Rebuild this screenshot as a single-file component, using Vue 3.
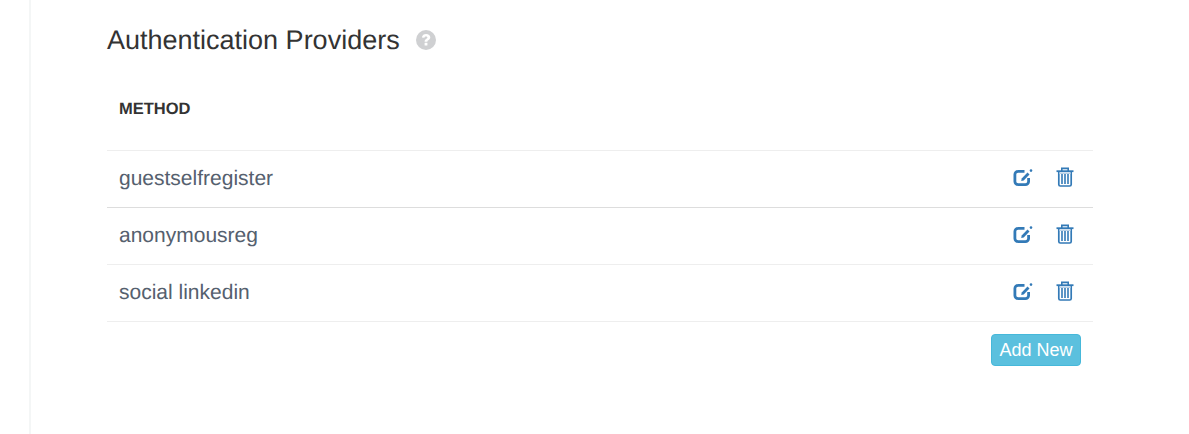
<template>
  <div class="page">
    <div class="panel">
      <h2 class="title">
        Authentication Providers
        <svg class="help" width="20" height="20" viewBox="0 0 20 20">
          <circle cx="10" cy="10" r="10" fill="#cfd0d2" />
          <path d="M5.9 7.4C6.2 5 7.9 3.9 10.1 3.9c2.4 0 4.2 1.3 4.2 3.4 0 1.6-1 2.3-1.9 2.9-.7.4-1 .7-1 1.5H8.6c0-1.6.6-2.3 1.5-2.8.8-.5 1.3-.8 1.3-1.4 0-.7-.6-1.1-1.4-1.1-.9 0-1.4.5-1.6 1.3z" fill="#fff" />
          <rect x="8.6" y="12.8" width="2.8" height="2.8" rx=".3" fill="#fff" />
        </svg>
      </h2>
      <div class="head">METHOD</div>
      <div v-for="(m, i) in methods" :key="m" class="row" :class="{ dark: i === 1 }">
        <span class="name">{{ m }}</span>
        <span class="actions">
          <svg width="20" height="20" viewBox="0 0 20 20" fill="none">
            <path d="M15.6 11v3.4a3.2 3.2 0 0 1-3.2 3.2H5.1a3.2 3.2 0 0 1-3.2-3.2V7.6a3.2 3.2 0 0 1 3.2-3.2h6.4" stroke="#337ab7" stroke-width="2.8" />
            <path d="M8.2 14l.5-2.6 5.8-5.8 2 2-5.8 5.8z" fill="#337ab7" />
            <circle cx="18" cy="3.6" r="1.3" fill="#337ab7" />
          </svg>
          <svg width="18" height="20" viewBox="0 0 18 20" fill="none" stroke="#337ab7">
            <path d="M0.5 4.2h17" stroke-width="1.8" />
            <path d="M5.8 4V1.4h6.4V4" stroke-width="1.6" />
            <path d="M2.8 5v12.4c0 1 .6 1.6 1.5 1.6h9.4c.9 0 1.5-.6 1.5-1.6V5" stroke-width="1.7" />
            <path d="M6 7v10M9 7v10M12 7v10" stroke-width="1.6" />
            <path d="M3 6.2h12" stroke="#a9c6e0" stroke-width="1.2" />
          </svg>
        </span>
      </div>
      <div class="footer">
        <button class="add" type="button">Add New</button>
      </div>
    </div>
  </div>
</template>

<script setup>
const methods = ['guestselfregister', 'anonymousreg', 'social linkedin']
</script>

<style>
html, body { background: #fff; overflow: hidden; }
</style>

<style scoped>
* { box-sizing: border-box; margin: 0; padding: 0; }
.page { height: 434px; padding-left: 29px; font-family: "Liberation Sans", Arial, sans-serif; text-rendering: geometricPrecision; }
.panel { height: 100%; padding: 0 96px 0 76px; border-left: 2px solid #f4f6f6; }
.title { display: flex; align-items: center; gap: 16px; height: 80px; font-size: 27px; font-weight: 400; color: #333; }
.head { height: 70px; padding: 19px 12px 0; font-size: 16.5px; line-height: 20px; font-weight: 700; color: #333; }
.row { display: flex; align-items: center; justify-content: space-between; height: 57px; padding: 0 19px 0 12px; border-top: 1px solid #eeeeee; }
.row.dark { border-top-color: #dddddd; }
.name { font-size: 21px; color: #55606e; }
.actions { display: flex; align-items: center; gap: 23px; margin-top: -4px; }
.footer { display: flex; justify-content: flex-end; padding: 12px 12px 0; border-top: 1px solid #eeeeee; }
.add { width: 90px; height: 32px; font: 18px "Liberation Sans", Arial, sans-serif; color: #fff; background: #5bc0de; border: 1px solid #46b8da; border-radius: 4px; }
</style>
